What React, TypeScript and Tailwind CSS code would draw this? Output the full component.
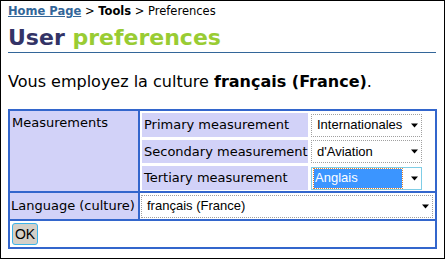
import React from "react";

const dots = "bg-[#d2d2f8]";

function Arrow() {
  return (
    <svg width="8" height="5" viewBox="0 0 8 5" className="shrink-0">
      <path d="M0 0.5 H7 L3.5 4.5 Z" fill="#000" />
    </svg>
  );
}

function Select({ value, wide, focused }: { value: string; wide?: boolean; focused?: boolean }) {
  return (
    <div
      className={`flex items-center h-[23px] bg-white font-['Liberation_Sans',sans-serif] text-[13px] text-black ${
        focused ? "border border-[#7fcde6]" : "border border-dotted border-[#a0a0a0]"
      } ${wide ? "w-full" : "w-[111px]"}`}
    >
      {focused ? (
        <div className="ml-[2px] h-[19px] w-[88px] bg-[#3b95ff] text-white leading-[18px] pl-[1px] outline-1 outline-dotted outline-[#e08030]">
          {value}
        </div>
      ) : (
        <div className="pl-[5px] leading-[18px]">{value}</div>
      )}
      <div className="flex-1" />
      <div className="mr-[2px] flex items-center">
        <Arrow />
      </div>
    </div>
  );
}

export default function App() {
  return (
    <div className="w-[446px] h-[261px] bg-white">
      <div className="w-[445px] h-[259px] border border-black bg-white pl-[7px] pr-[8px] font-['DejaVu_Sans',Verdana,sans-serif] text-black">
        <div className="text-[11.5px] leading-[13px] pt-[4px]">
          <span className="text-[#336699] font-bold underline">Home Page</span>
          <span> &gt; </span>
          <span className="font-bold">Tools</span>
          <span> &gt; Preferences</span>
        </div>
        <div className="mt-[7px] border-b border-[#336699] pb-[0px]">
          <span className="text-[22px] leading-[25px] font-bold text-[#333366]">User </span>
          <span className="text-[22px] leading-[25px] font-bold text-[#99cc33]">preferences</span>
        </div>
        <div className="mt-[19px] text-[16px] leading-[19px]">
          Vous employez la culture <span className="font-bold">français (France)</span>.
        </div>
        <div className="mt-[18px] w-[429px] border-2 border-[#3366cc] bg-[#3366cc] grid grid-cols-[128px_1fr] gap-[2px] text-[13px] leading-[16px]">
          <div className={`${dots} pl-[2px] pt-[4px]`}>Measurements</div>
          <div className="bg-white pt-[2px] pb-[1px] px-[2px] grid grid-cols-[166px_1fr] gap-x-[2px] gap-y-[3px]">
            <div className={`${dots} pl-[2px] flex items-center h-[24px]`}>Primary measurement</div>
            <div className="flex items-center pl-[1px]">
              <Select value="Internationales" />
            </div>
            <div className={`${dots} pl-[2px] flex items-center h-[23px]`}>Secondary measurement</div>
            <div className="flex items-center pl-[1px]">
              <Select value="d'Aviation" />
            </div>
            <div className={`${dots} pl-[2px] flex items-center h-[24px]`}>Tertiary measurement</div>
            <div className="flex items-center pl-[1px]">
              <Select value="Anglais" focused />
            </div>
          </div>
          <div className={`${dots} pl-[1px] flex items-center h-[26px]`}>Language (culture)</div>
          <div className="bg-white flex items-center pl-[1px] pr-[2px]">
            <Select value="français (France)" wide />
          </div>
          <div className="col-span-2 bg-white h-[26px] flex items-center pl-[2px]">
            <div className="h-[22px] w-[26px] rounded-[3px] border border-[#3cb4ea] bg-[#d4d0c8] flex items-center justify-center font-['Liberation_Sans',sans-serif] text-[14px] text-black">
              OK
            </div>
          </div>
        </div>
      </div>
    </div>
  );
}
